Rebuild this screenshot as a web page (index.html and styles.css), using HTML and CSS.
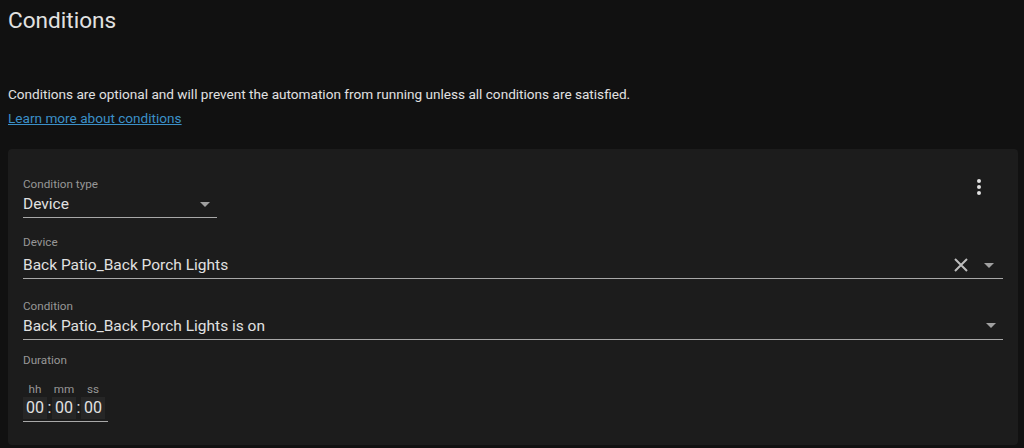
FILE: index.html
```html
<!DOCTYPE html>
<html lang="en">
<head>
<meta charset="utf-8">
<title>Conditions</title>
<link rel="stylesheet" href="styles.css">
</head>
<body>
<main class="page">
  <h1 class="title">Conditions</h1>
  <p class="desc">Conditions are optional and will prevent the automation from running unless all conditions are satisfied.</p>
  <a class="link" href="#">Learn more about conditions</a>

  <section class="card">
    <div class="row">
      <div class="field field-type">
        <div class="label">Condition type</div>
        <div class="value-line">
          <span class="value">Device</span>
          <svg class="caret" viewBox="0 0 10 5" width="10" height="5"><path d="M0 0L5 5L10 0Z"/></svg>
        </div>
      </div>
      <button class="menu" aria-label="menu">
        <svg viewBox="0 0 24 24" width="24" height="24"><path d="M12,16A2,2 0 0,1 14,18A2,2 0 0,1 12,20A2,2 0 0,1 10,18A2,2 0 0,1 12,16M12,10A2,2 0 0,1 14,12A2,2 0 0,1 12,14A2,2 0 0,1 10,12A2,2 0 0,1 12,10M12,4A2,2 0 0,1 14,6A2,2 0 0,1 12,8A2,2 0 0,1 10,6A2,2 0 0,1 12,4Z"/></svg>
      </button>
    </div>

    <div class="field field-device">
      <div class="label">Device</div>
      <div class="value-line">
        <span class="value">Back Patio_Back Porch Lights</span>
        <svg class="clear" viewBox="0 0 14 14" width="14" height="14"><path d="M1 1L13 13M13 1L1 13"/></svg>
        <svg class="caret caret-device" viewBox="0 0 10 5" width="10" height="5"><path d="M0 0L5 5L10 0Z"/></svg>
      </div>
    </div>

    <div class="field field-cond">
      <div class="label">Condition</div>
      <div class="value-line">
        <span class="value">Back Patio_Back Porch Lights is on</span>
        <svg class="caret caret-cond" viewBox="0 0 10 5" width="10" height="5"><path d="M0 0L5 5L10 0Z"/></svg>
      </div>
    </div>

    <div class="duration">
      <div class="label">Duration</div>
      <div class="time">
        <div class="unit"><span class="unit-label">hh</span><span class="box">00</span></div>
        <span class="colon">:</span>
        <div class="unit"><span class="unit-label">mm</span><span class="box">00</span></div>
        <span class="colon">:</span>
        <div class="unit"><span class="unit-label">ss</span><span class="box">00</span></div>
      </div>
    </div>
  </section>
</main>
</body>
</html>
```

FILE: styles.css
```css
* { box-sizing: border-box; }
html, body {
  margin: 0;
  background: #111111;
  color: #e1e1e1;
  font-family: Roboto, "Liberation Sans", sans-serif;
}
.page {
  padding: 5px 6px 0 8px;
}
.title {
  margin: 0;
  font-size: 22.6px;
  line-height: 32px;
  font-weight: 400;
  color: #e1e1e1;
}
.desc {
  margin: 47px 0 0;
  font-size: 13.6px;
  line-height: 20px;
  color: #e1e1e1;
}
.link {
  display: inline-block;
  margin-top: 4px;
  font-size: 13.6px;
  line-height: 20px;
  color: #3b90c8;
  text-decoration: underline;
}
.card {
  margin-top: 21px;
  background: #1c1c1c;
  border-radius: 4px;
  padding: 27px 15px 23px;
}
.row {
  display: flex;
  justify-content: space-between;
  align-items: flex-start;
}
.field {
  border-bottom: 1px solid #a8a8a8;
}
.label {
  font-size: 11.7px;
  line-height: 16px;
  color: #979797;
}
.value-line {
  display: flex;
  align-items: center;
  height: 20px;
  margin-top: 2px;
  margin-bottom: 3px;
}
.value {
  flex: 1;
  font-size: 15.5px;
  line-height: 20px;
  color: #e1e1e1;
}
.caret { fill: #a0a0a0; flex: none; }
.field-type { width: 194px; }
.field-type .caret { margin-right: 7px; }
.menu {
  margin: -1px 12px 0 0;
  padding: 0;
  border: 0;
  background: none;
  width: 24px;
  height: 24px;
  fill: #e1e1e1;
  display: block;
}
.menu svg { display: block; }
.field-device { margin-top: 16px; }
.field-device .value-line { margin-top: 5px; }
.clear {
  stroke: #bdbdbd;
  stroke-width: 2;
  margin-right: 16px;
  flex: none;
}
.caret-device { margin-right: 9px; }
.field-cond { margin-top: 19px; }
.caret-cond { margin-right: 7px; margin-top: -2px; }
.duration { margin-top: 12px; }
.time {
  display: inline-flex;
  align-items: flex-end;
  margin-top: 13px;
  padding-right: 3px;
  border-bottom: 1px solid #a8a8a8;
  padding-bottom: 2px;
}
.unit {
  display: flex;
  flex-direction: column;
  align-items: center;
  width: 24px;
}
.unit-label {
  font-size: 11.7px;
  line-height: 16px;
  color: #979797;
}
.box {
  width: 24px;
  height: 22px;
  background: #262626;
  font-size: 16px;
  line-height: 22px;
  text-align: center;
  color: #e1e1e1;
}
.colon {
  width: 5px;
  height: 22px;
  font-size: 16px;
  line-height: 22px;
  text-align: center;
  color: #e1e1e1;
}
```
